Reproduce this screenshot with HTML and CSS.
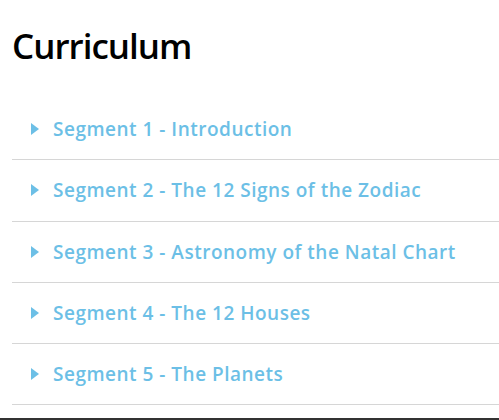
FILE: index.html
```html
<!DOCTYPE html>
<html lang="en">
<head>
  <meta charset="UTF-8" />
  <meta name="viewport" content="width=device-width, initial-scale=1.0" />
  <title>Curriculum</title>
  <link rel="stylesheet" href="styles.css">
</head>
<body>
  <div class="page">
    <h1>Curriculum</h1>
    <ul class="segments">
      <li class="segment"><span class="caret"></span>Segment 1 - Introduction</li>
      <li class="segment"><span class="caret"></span>Segment 2 - The 12 Signs of the Zodiac</li>
      <li class="segment"><span class="caret"></span>Segment 3 - Astronomy of the Natal Chart</li>
      <li class="segment"><span class="caret"></span>Segment 4 - The 12 Houses</li>
      <li class="segment"><span class="caret"></span>Segment 5 - The Planets</li>
    </ul>
  </div>
  <div class="footer-bar"></div>
</body>
</html>
```

FILE: styles.css
```css
body {
  font-family: 'Open Sans', Lato, sans-serif;
  margin: 0;
  background-color: #fff;
  color: #000;
}
.page {
  padding: 0 0 0 12px;
  height: 418px;
  overflow: hidden;
}
h1 {
  font-size: 35px;
  font-weight: 600;
  margin: 0;
  padding: 22px 0 0;
  line-height: 48px;
  letter-spacing: -1px;
}
.segments {
  list-style: none;
  margin: 29px 0 0;
  padding: 0;
}
.segment {
  display: flex;
  align-items: center;
  height: 60.25px;
  border-bottom: 1px solid #d6d6d6;
  color: #6cbfe6;
  font-size: 19px;
  font-weight: 600;
  letter-spacing: 0.5px;
  padding-left: 19px;
}
.caret {
  width: 0;
  height: 0;
  border-top: 6.5px solid transparent;
  border-bottom: 6.5px solid transparent;
  border-left: 8px solid #6cbfe6;
  margin-right: 14px;
}
.footer-bar {
  height: 2px;
  background-color: #333;
}
```
